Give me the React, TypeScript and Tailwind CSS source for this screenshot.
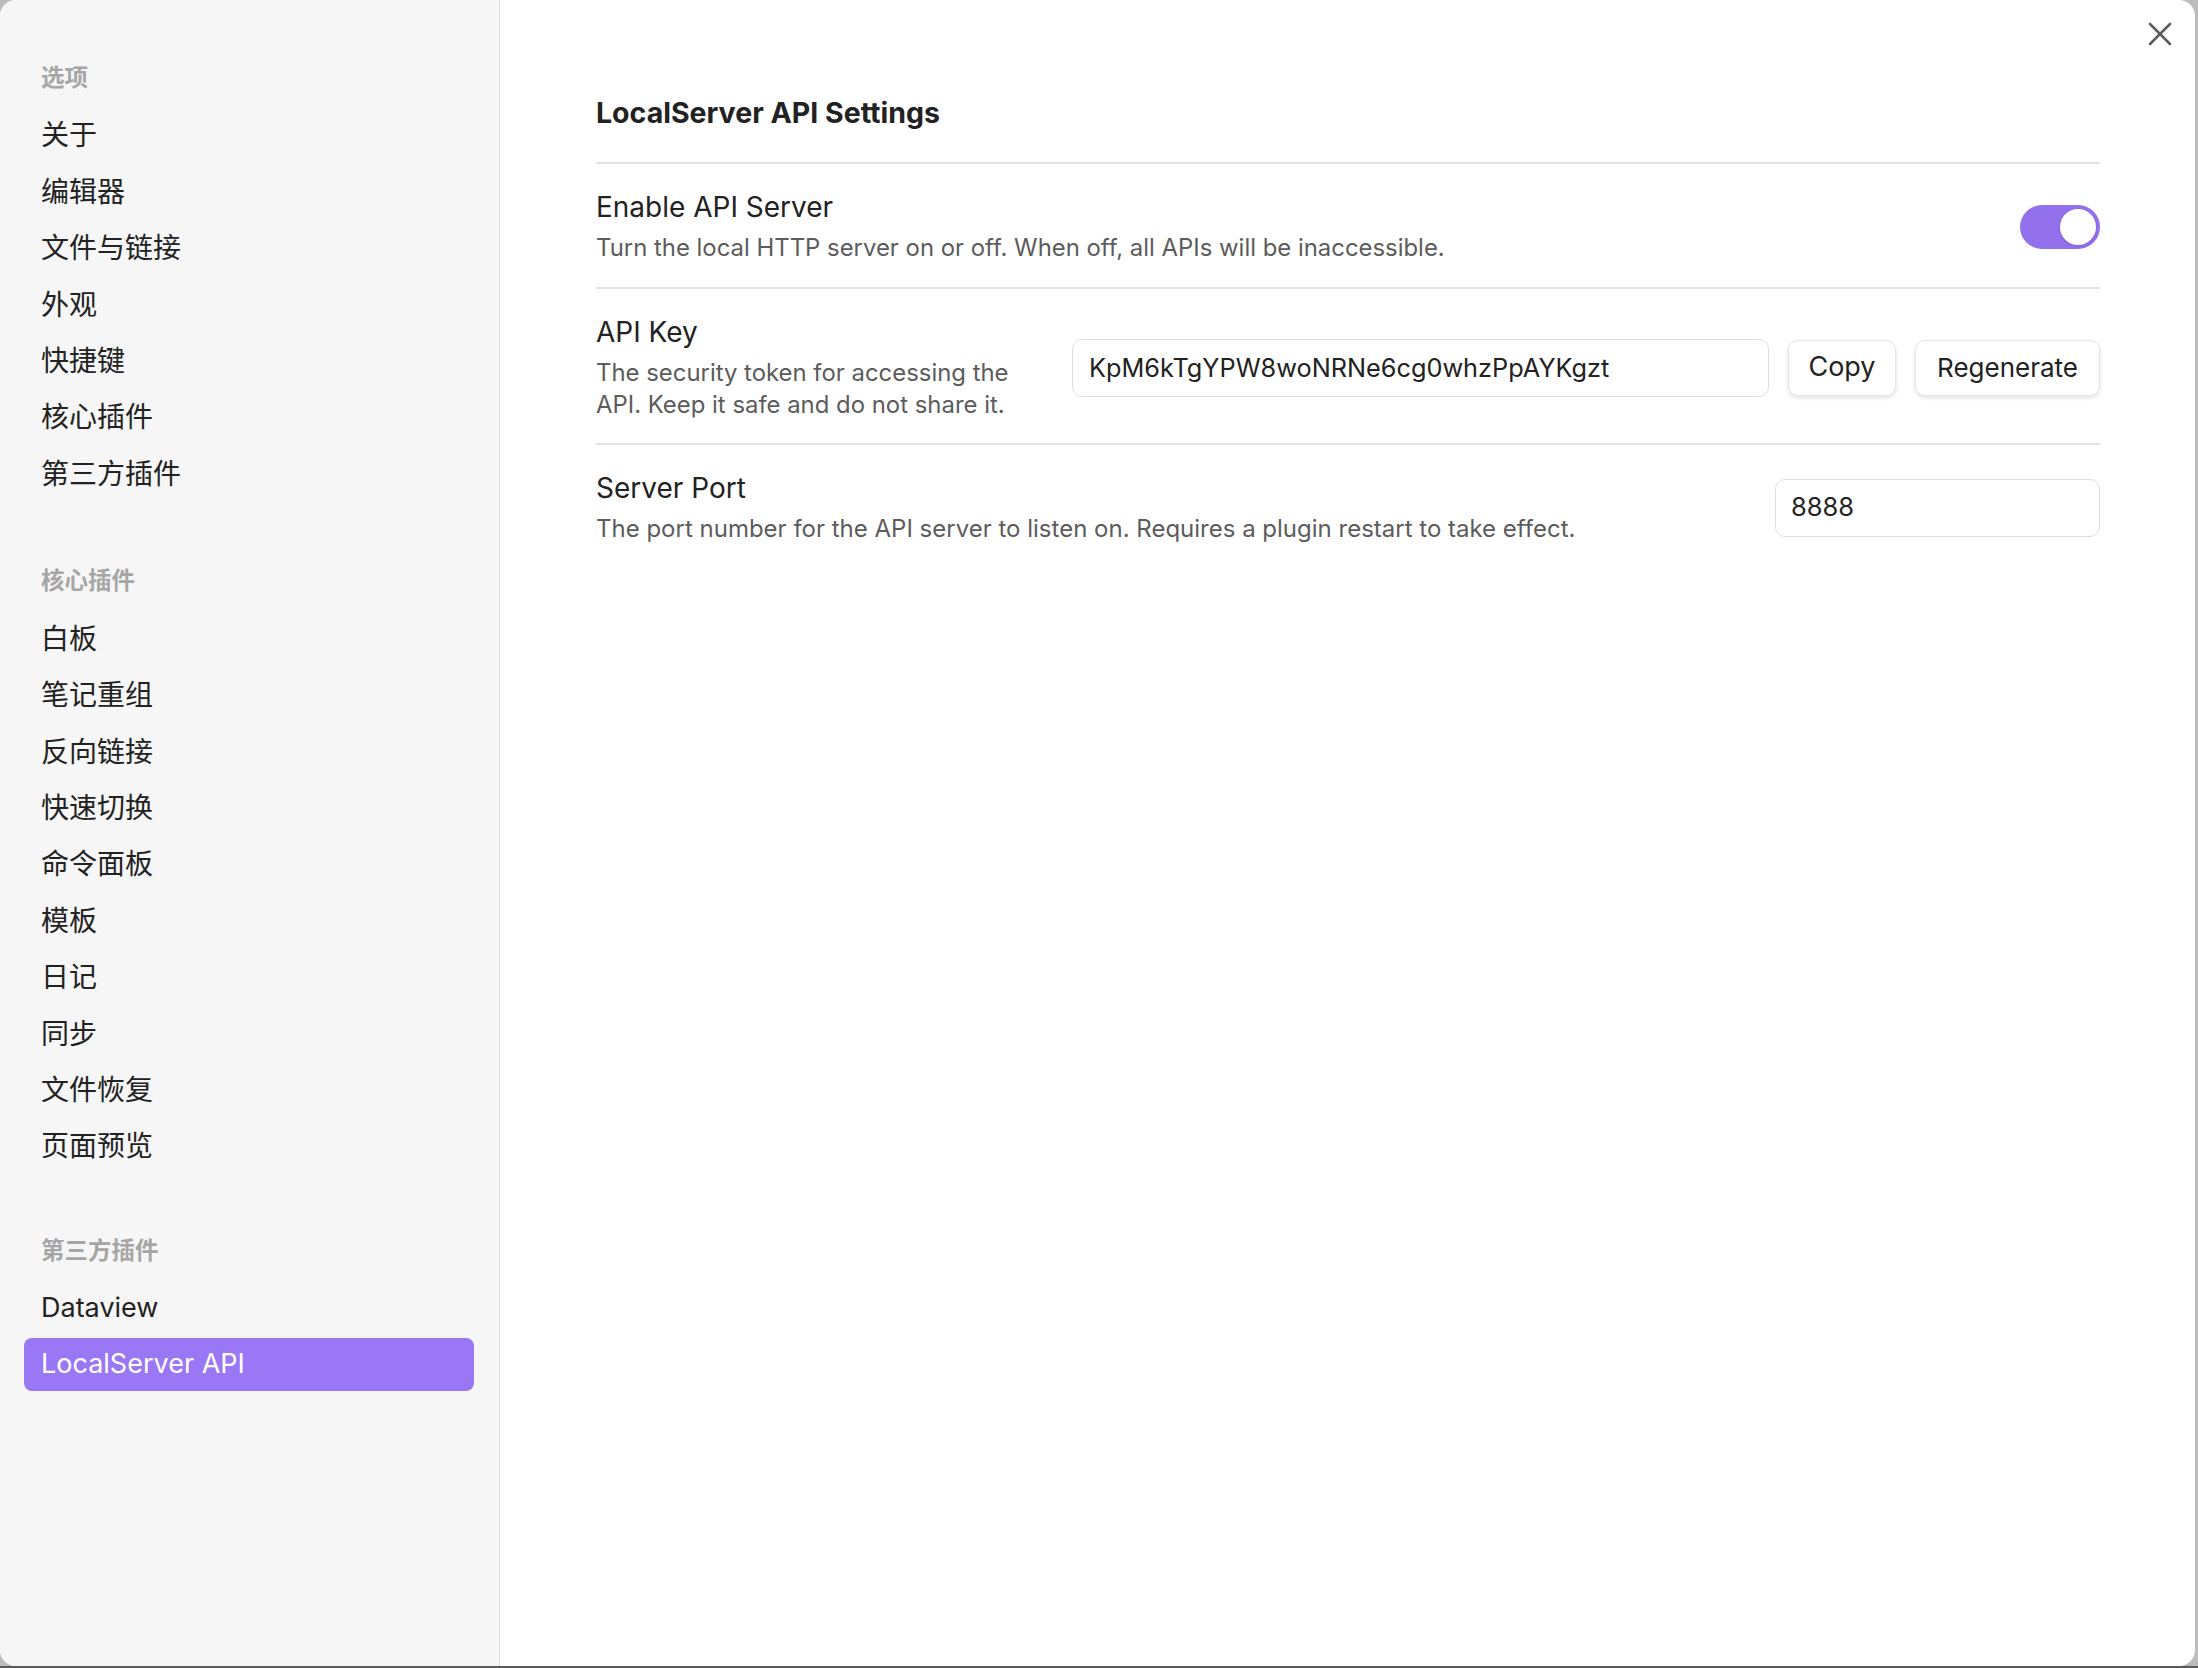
import React from "react";

const FONT = '"Inter", "Noto Sans CJK SC", sans-serif';

function SectionHeader({ children }: { children: React.ReactNode }) {
  return (
    <div className="h-[53px] mb-[1.6px] flex items-center px-[17px] text-[23.5px] font-bold text-[#a6a6a6]">
      {children}
    </div>
  );
}

function NavItem({ label, active = false, latin = false }: { label: string; active?: boolean; latin?: boolean }) {
  const size = latin ? " text-[27px]" : " text-[28px]";
  return (
    <div
      className={
        (active
          ? "h-[53px] flex items-center px-[17px] rounded-[8px] bg-[#9a78f5] text-white"
          : "h-[53px] flex items-center px-[17px] rounded-[8px] text-[#222222]") + size
      }
    >
      {label}
    </div>
  );
}

export default function App() {
  const options = ["关于", "编辑器", "文件与链接", "外观", "快捷键", "核心插件", "第三方插件"];
  const core = ["白板", "笔记重组", "反向链接", "快速切换", "命令面板", "模板", "日记", "同步", "文件恢复", "页面预览"];
  return (
    <div
      className="w-[2198px] h-[1668px] bg-[#bdbdbd] border-b-2 border-[#5a5a5a] overflow-hidden"
      style={{ fontFamily: FONT }}
    >
      <div className="relative w-[2195px] h-[1666px] rounded-[16px] overflow-hidden flex bg-white">
        {/* Sidebar */}
        <div className="w-[500px] h-full bg-[#f6f6f6] border-r-[1.5px] border-[#dedede] pt-[51px] pl-[24px] pr-[25px] flex flex-col">
          <div className="flex flex-col gap-[3.4px]">
            <SectionHeader>选项</SectionHeader>
            {options.map((o) => (
              <NavItem key={o} label={o} />
            ))}
          </div>
          <div className="flex flex-col gap-[3.4px] mt-[54px]">
            <SectionHeader>核心插件</SectionHeader>
            {core.map((o) => (
              <NavItem key={o} label={o} />
            ))}
          </div>
          <div className="flex flex-col gap-[3.4px] mt-[51px]">
            <SectionHeader>第三方插件</SectionHeader>
            <NavItem label="Dataview" latin />
            <NavItem label="LocalServer API" active latin />
          </div>
        </div>

        {/* Main */}
        <div className="flex-1 h-full pl-[96px] pr-[95px] pt-[93px]">
          <div className="h-[40px] flex items-center text-[28.5px] font-bold text-[#222222]">
            LocalServer API Settings
          </div>
          <div className="mt-[29px] h-[2px] bg-[#e3e3e3]" />

          {/* Row 1 */}
          <div className="flex items-center pt-[25px] pb-[23px]">
            <div className="flex-1">
              <div className="h-[36px] flex items-center text-[28px] text-[#222222]">Enable API Server</div>
              <div className="mt-[7px] leading-[32px] text-[23.9px] text-[#5c5c5c]">
                Turn the local HTTP server on or off. When off, all APIs will be inaccessible.
              </div>
            </div>
            <div className="w-[80px] h-[44px] rounded-full bg-[#9370ec] flex items-center justify-end pr-[4px]">
              <div className="w-[36px] h-[36px] rounded-full bg-white shadow-sm" />
            </div>
          </div>
          <div className="h-[2px] bg-[#e3e3e3]" />

          {/* Row 2 */}
          <div className="flex items-center pt-[25px] pb-[22px]">
            <div className="flex-1">
              <div className="h-[36px] flex items-center text-[28px] text-[#222222]">API Key</div>
              <div className="mt-[7px] leading-[32px] text-[23.9px] text-[#5c5c5c] whitespace-nowrap">
                The security token for accessing the
                <br />
                API. Keep it safe and do not share it.
              </div>
            </div>
            <div className="flex items-center gap-[19px]">
              <div className="w-[697px] h-[58px] rounded-[10px] border-[1.5px] border-[#dedede] bg-white flex items-center pl-[16px] text-[25.3px] text-[#222222]">
                KpM6kTgYPW8woNRNe6cg0whzPpAYKgzt
              </div>
              <div className="w-[108px] h-[56px] rounded-[10px] bg-white border border-[#e6e6e6] shadow-[0_2px_4px_rgba(0,0,0,0.12)] flex items-center justify-center text-[27px] text-[#222222]">
                Copy
              </div>
              <div className="w-[185px] h-[56px] rounded-[10px] bg-white border border-[#e6e6e6] shadow-[0_2px_4px_rgba(0,0,0,0.12)] flex items-center justify-center text-[26px] text-[#222222]">
                Regenerate
              </div>
            </div>
          </div>
          <div className="h-[2px] bg-[#e3e3e3]" />

          {/* Row 3 */}
          <div className="flex items-center pt-[25px] pb-[23px]">
            <div className="flex-1">
              <div className="h-[36px] flex items-center text-[28px] text-[#222222]">Server Port</div>
              <div className="mt-[7px] leading-[32px] text-[24px] text-[#5c5c5c]">
                The port number for the API server to listen on. Requires a plugin restart to take effect.
              </div>
            </div>
            <div className="w-[325px] h-[58px] rounded-[10px] border-[1.5px] border-[#dedede] bg-white flex items-center pl-[15px] text-[25.5px] text-[#222222]">
              8888
            </div>
          </div>
        </div>

        {/* Close button */}
        <div className="absolute left-[2146px] top-[20px] w-[28px] h-[28px] flex items-center justify-center">
          <svg width="24" height="24" viewBox="0 0 24 24" fill="none" stroke="#5c5c5c" strokeWidth="2.6" strokeLinecap="round">
            <path d="M2 2 L22 22" />
            <path d="M22 2 L2 22" />
          </svg>
        </div>
      </div>
    </div>
  );
}
